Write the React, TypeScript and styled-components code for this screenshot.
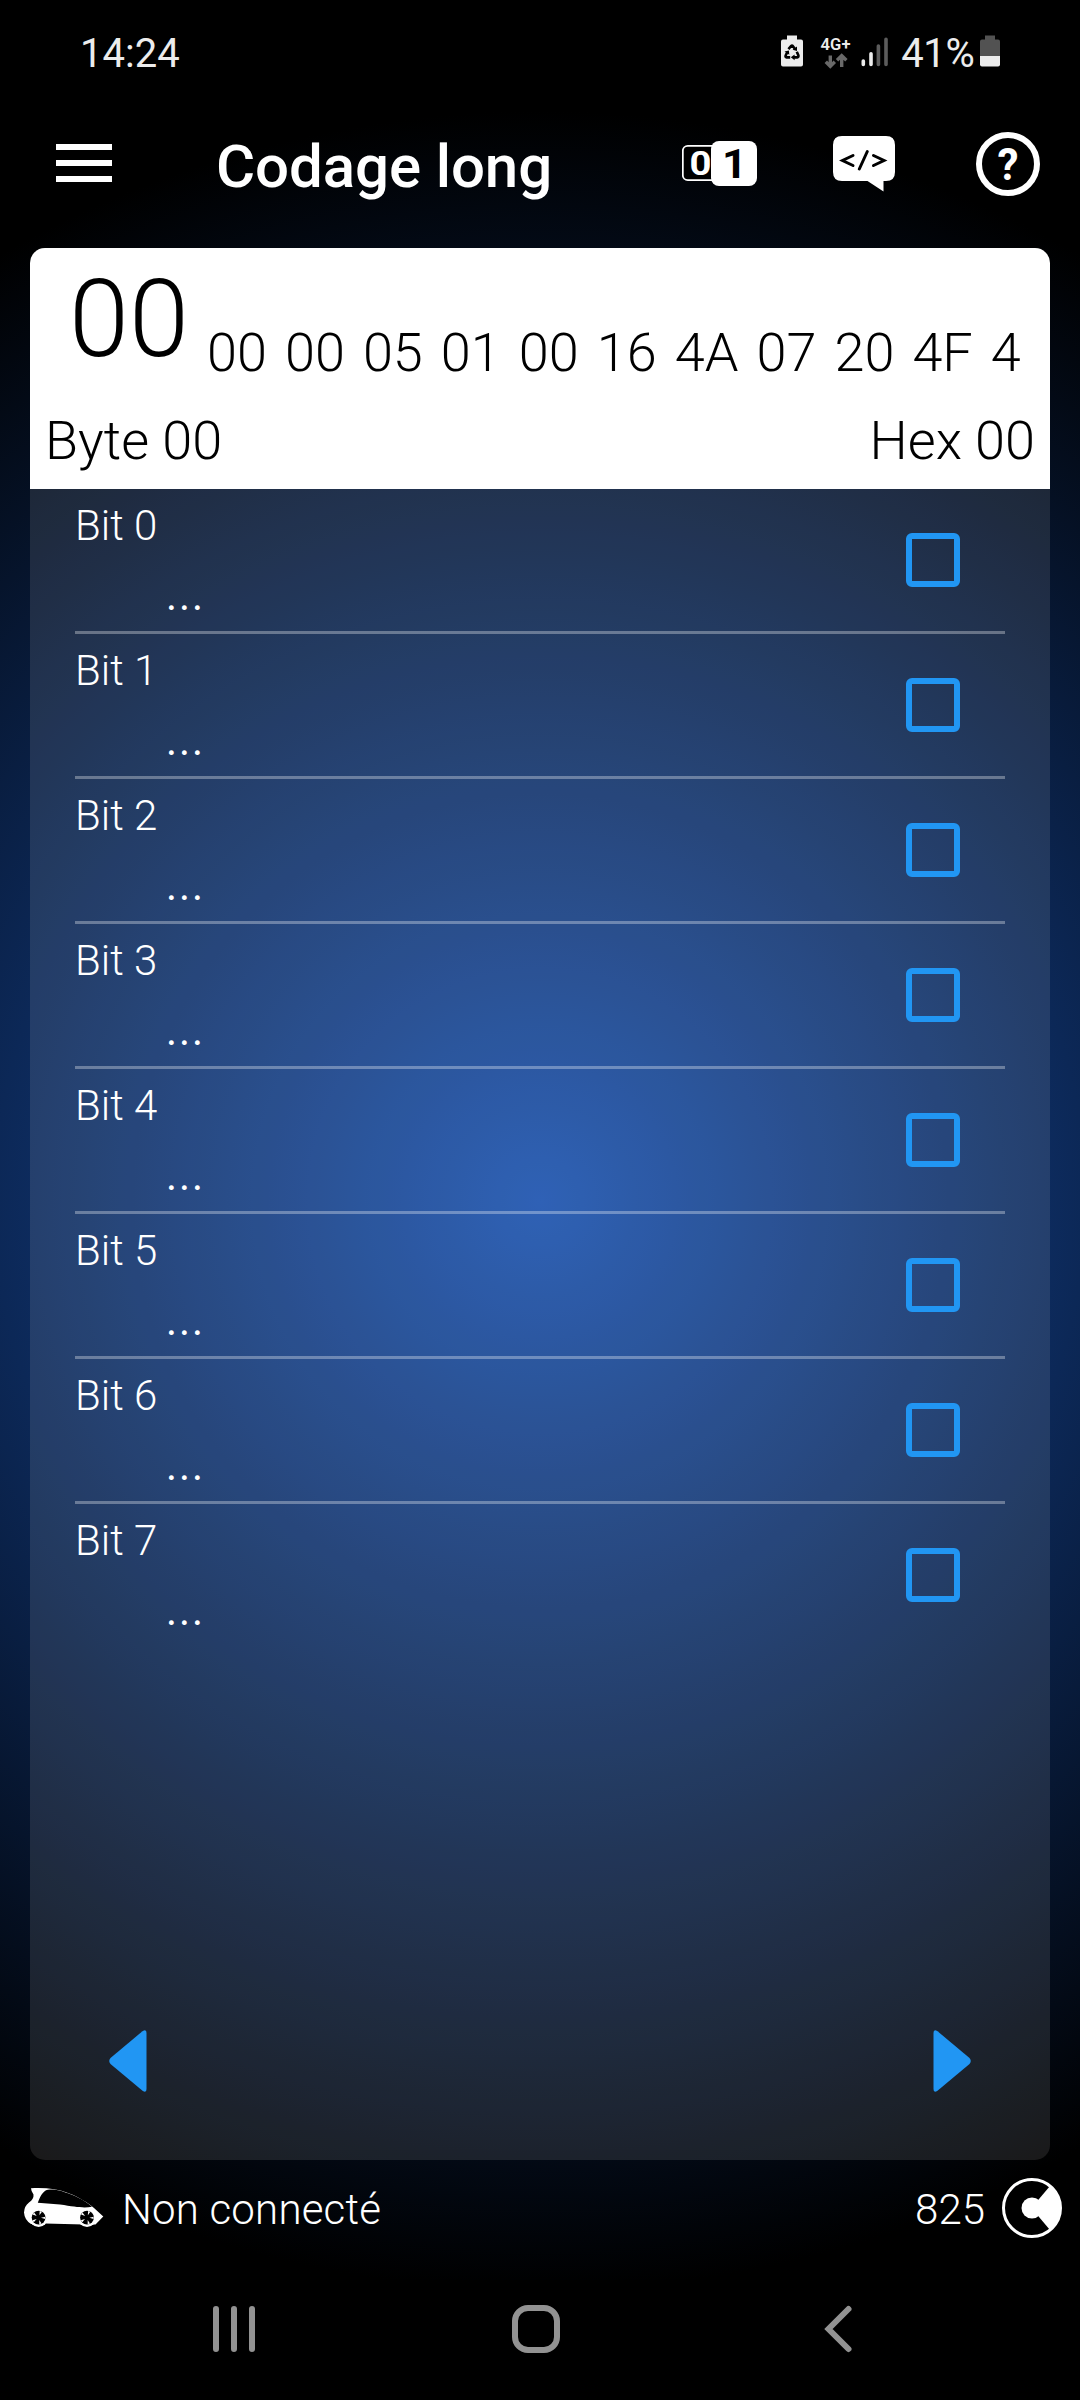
import React from 'react';
import styled, { createGlobalStyle } from 'styled-components';

const GlobalStyle = createGlobalStyle`
  * { box-sizing: border-box; }
  body { margin: 0; background: #000; font-family: Roboto, "Noto Sans", sans-serif; }
`;

const Screen = styled.div`
  width: 1080px;
  height: 2400px;
  display: flex;
  flex-direction: column;
  overflow: hidden;
  color: #fff;
  background: radial-gradient(circle 1090px at 540px 1201px, #1850ae 0%, #000 100%) #000;
`;

const StatusBar = styled.div`
  height: 101px;
  flex: none;
  display: flex;
  align-items: flex-start;
  padding: 30px 80px 0 80px;
  color: #ececec;
  font-size: 40px;
  line-height: 47px;
`;
const StatusIcons = styled.div`
  margin-left: auto;
  display: flex;
`;
const Percent = styled.span`
  margin-left: 11px;
  letter-spacing: -0.3px;
`;

const AppBar = styled.header`
  height: 147px;
  flex: none;
  display: flex;
  align-items: flex-start;
  padding: 31px 39px 0 56px;
`;
const Burger = styled.div`
  display: flex;
  flex-direction: column;
  gap: 10px;
  width: 56px;
  padding-top: 12px;
`;
const BurgerLine = styled.i`
  height: 6px;
  background: #fff;
`;
const Title = styled.h1`
  margin: 0 auto 0 104px;
  font-size: 60px;
  line-height: 70px;
  font-weight: 500;
  letter-spacing: -0.1px;
  white-space: nowrap;
`;
const Actions = styled.div`
  display: flex;
`;

const Card = styled.main`
  width: 1020px;
  height: 1912px;
  flex: none;
  margin: 0 30px;
  border-radius: 15px;
  overflow: hidden;
  display: flex;
  flex-direction: column;
  background: rgba(255, 255, 255, 0.1);
`;
const Coding = styled.section`
  height: 241px;
  flex: none;
  display: flex;
  flex-direction: column;
  background: #fff;
  color: #000;
  font-weight: 300;
  font-size: 54px;
  line-height: 64px;
`;
const Bytes = styled.div`
  display: flex;
  align-items: flex-start;
  height: 158px;
  padding-left: 39px;
  white-space: nowrap;
  font-kerning: none;
`;
const Current = styled.span`
  width: 138px;
  padding-top: 8px;
  font-size: 108px;
  line-height: 127px;
`;
const ByteList = styled.div`
  display: flex;
  gap: 18.05px;
  padding-top: 73px;
`;
const Summary = styled.div`
  display: flex;
  justify-content: space-between;
  padding: 3px 15px 0;
`;

const Bits = styled.ul`
  margin: 0;
  padding: 0 45px;
  list-style: none;
  flex: 1;
`;
const BitRow = styled.li<{ $last: boolean }>`
  height: 145px;
  display: flex;
  justify-content: space-between;
  border-bottom: 3px solid ${(p) => (p.$last ? 'transparent' : 'rgba(255, 255, 255, 0.32)')};
`;
const BitText = styled.div`
  font-size: 42px;
  line-height: 49px;
  font-weight: 300;
  padding-top: 12px;
`;
const BitValue = styled.div`
  padding: 21px 0 0 91px;
  font-weight: 400;
  letter-spacing: 1.9px;
`;
const Checkbox = styled.span`
  width: 54px;
  height: 54px;
  margin: 44px 45px 0 0;
  border: 6px solid #2196f3;
  border-radius: 6px;
`;

const Pager = styled.div`
  display: flex;
  justify-content: space-between;
  padding: 0 79px 68px;
`;

const Footer = styled.footer`
  height: 120px;
  flex: none;
  display: flex;
  align-items: flex-start;
  padding: 15px 17px 0 22px;
  font-size: 42px;
  line-height: 49px;
  font-weight: 300;
`;
const Connection = styled.span`
  padding: 10px 0 0 16px;
  letter-spacing: 0.2px;
`;
const Counter = styled.span`
  margin-left: auto;
  padding-top: 10px;
`;
const NavBar = styled.nav`
  height: 120px;
  display: flex;
  align-items: flex-start;
  padding: 22px 0 0 210px;
  background: #000;
`;

const Icon = styled.svg<{ $l?: number; $t?: number }>`
  display: block;
  flex: none;
  margin-left: ${(p) => p.$l ?? 0}px;
  margin-top: ${(p) => p.$t ?? 0}px;
`;

const BYTES = ['00', '00', '05', '01', '00', '16', '4A', '07', '20', '4F', '4'];
const BITS = [0, 1, 2, 3, 4, 5, 6, 7];

const BatteryCare = () => (
  <Icon width="24" height="33" viewBox="780 35 24 33" $t={5}>
    <path d="M787 35.5h10v4h4q2 0 2 2v23q0 2-2 2h-18q-2 0-2-2v-23q0-2 2-2h4z" fill="#ececec" />
    <g fill="none" stroke="#000" strokeWidth="2.6">
      <path d="M788.4 49.2 791.2 46q.8-.8 1.6 0l2.4 3.2" />
      <path d="M787.2 52.2 785.6 55.6q-.4 1.6 1 1.8h3.6" />
      <path d="M796.8 51.8 798.4 55.4q.4 1.8-1.2 2h-3.6" />
    </g>
    <path d="M797 46.5v4.6l-4.4-1.4zM784.5 51.6l4.4-1 .4 4.2zM794.6 54.4v5.8l-3.8-2.9z" fill="#000" />
  </Icon>
);

const Wheel = ({ x }: { x: number }) => (
  <g transform={`translate(${x} 2217.6)`}>
    <circle r="9.3" fill="#fff" />
    <circle r="6.9" fill="#000" />
    {[0, 72, 144, 216, 288].map((a) => (
      <path key={a} d="M-1.2-6.6h2.4L0-2.4z" fill="#fff" transform={`rotate(${a + 20})`} />
    ))}
  </g>
);

export default function App() {
  return (
    <>
      <GlobalStyle />
      <Screen>
        <StatusBar>
          <span>14:24</span>
          <StatusIcons>
            <BatteryCare />
            <Icon width="32" height="44" viewBox="820 30 32 44" $l={16}>
              <text x="820.5" y="50.2" fontSize="16.5" fontWeight="600" textLength="30" fill="#ececec">4G+</text>
              <g fill="none" stroke="#696969" strokeWidth="3.4">
                <path d="M830.3 55.5v11M825.8 61.8l4.5 4.6 4.5-4.6M841.7 67V57M837 60.3l4.7-4.6 4.7 4.6" />
              </g>
            </Icon>
            <Icon width="30" height="44" viewBox="860 30 30 44" $l={8}>
              <g fill="none" strokeWidth="3.6" strokeLinecap="round">
                <path d="M863.3 61v3.5M871 53.8v10.7" stroke="#ececec" />
                <path d="M878.4 46v18.5M886 39.3v25.2" stroke="#5c5c5c" />
              </g>
            </Icon>
            <Percent>41%</Percent>
            <Icon width="20" height="33" viewBox="980 35 20 33" $l={5.5} $t={5}>
              <path d="M985 35.5h10v4h3q2 0 2 2V56h-20V41.5q0-2 2-2h3z" fill="#525252" />
              <path d="M980 56h20v8.5q0 2-2 2h-16q-2 0-2-2z" fill="#ececec" />
            </Icon>
          </StatusIcons>
        </StatusBar>

        <AppBar>
          <Burger>
            <BurgerLine />
            <BurgerLine />
            <BurgerLine />
          </Burger>
          <Title>Codage long</Title>
          <Actions>
            <Icon width="76" height="46" viewBox="682 141 76 46" $t={9}>
              <rect x="682.8" y="145.8" width="40" height="34.4" rx="5" fill="#000" stroke="#fff" strokeWidth="1.8" />
              <text x="689.5" y="174.5" fontSize="32.5" fontWeight="700" textLength="22" lengthAdjust="spacingAndGlyphs" fill="#fff">0</text>
              <rect x="711" y="141" width="46" height="45" rx="8" fill="#fff" />
              <text x="722" y="177.5" fontSize="40" fontWeight="700" textLength="25" lengthAdjust="spacingAndGlyphs" fill="#000">1</text>
            </Icon>
            <Icon width="64" height="57" viewBox="832 135 64 57" $l={74} $t={3}>
              <path d="M842 136h44q9 0 9 9v27q0 9-9 9h-2.5v10.5L867.5 181H842q-9 0-9-9v-27q0-9 9-9z" fill="#fff" />
              <path d="M853 155.5l-10.500 5 10.500 5M873.500 155.500l10.500 5-10.500 5M867.300 151.500l-8 17.500" fill="none" stroke="#000" strokeWidth="3" strokeLinecap="round" />
            </Icon>
            <Icon width="66" height="66" viewBox="975 131 66 66" $l={79} $t={-1}>
              <circle cx="1008" cy="164" r="29" fill="none" stroke="#fff" strokeWidth="6" />
              <text x="1008" y="180" fontSize="45" fontWeight="700" textAnchor="middle" textLength="21" lengthAdjust="spacingAndGlyphs" fill="#fff">?</text>
            </Icon>
          </Actions>
        </AppBar>

        <Card>
          <Coding>
            <Bytes>
              <Current>00</Current>
              <ByteList>
                {BYTES.map((b, i) => (
                  <span key={i}>{b}</span>
                ))}
              </ByteList>
            </Bytes>
            <Summary>
              <span>Byte 00</span>
              <span>Hex 00</span>
            </Summary>
          </Coding>
          <Bits>
            {BITS.map((b) => (
              <BitRow key={b} $last={b === 7}>
                <BitText>
                  <div>Bit {b}</div>
                  <BitValue>...</BitValue>
                </BitText>
                <Checkbox />
              </BitRow>
            ))}
          </Bits>
          <Pager>
            <Icon width="38" height="62" viewBox="0 0 38 62">
              <path d="M33.5 1.2Q37.5-1.5 37.5 3v56q0 4.5-4 1.8L1.500 34Q-1 31 1.500 28z" fill="#2196f3" />
            </Icon>
            <Icon width="38" height="62" viewBox="0 0 38 62">
              <path d="M4.5 1.2Q.5-1.5.5 3v56q0 4.5 4 1.8L36.500 34Q39 31 36.500 28z" fill="#2196f3" />
            </Icon>
          </Pager>
        </Card>

        <Footer>
          <Icon width="84" height="44" viewBox="22 2185 84 44" $t={10}>
            <path d="M31 2188.3C45 2187.5 58 2189 68 2193 79 2197 88 2203 94 2208L103.3 2216.5 95.5 2224.5H84L45 2223.5 31 2224Q24.5 2220 24 2212.5 24.3 2206 29 2202.5 34 2199 33.5 2194.5 31 2191 31 2188.3z" fill="#fff" />
            <path d="M37.8 2202.8C41 2194 44 2189.4 50 2189.4 58 2189.4 63 2191.3 68 2193.3 79 2197.3 86 2201.700 92 2206.700 84 2208.300 76 2207 60 2204.500 37.800 2202.800z" fill="#000" />
            <Wheel x={38.6} />
            <Wheel x={87} />
          </Icon>
          <Connection>Non connecté</Connection>
          <Counter>825</Counter>
          <Icon width="62" height="62" viewBox="-31 -31 62 62" $l={16} $t={2}>
            <circle r="28.5" fill="none" stroke="#fff" strokeWidth="3" />
            <circle r="10.5" fill="#fff" />
            <path d="M0 0 7 -9 18 -22A29 29 0 0 1 18 22L7 9z" fill="#fff" />
          </Icon>
        </Footer>

        <NavBar>
          <Icon width="48" height="54" viewBox="210 2302 48 54">
            <path d="M216 2309v40M234 2309v40M252 2309v40" stroke="#929292" strokeWidth="6" strokeLinecap="round" />
          </Icon>
          <Icon width="54" height="54" viewBox="509 2302 54 54" $l={251}>
            <rect x="515" y="2308" width="42" height="42" rx="13" fill="none" stroke="#929292" strokeWidth="6" />
          </Icon>
          <Icon width="34" height="54" viewBox="822 2302 34 54" $l={259}>
            <path d="M848.5 2309 828.5 2329l20 20" fill="none" stroke="#929292" strokeWidth="6" strokeLinecap="round" />
          </Icon>
        </NavBar>
      </Screen>
    </>
  );
}
